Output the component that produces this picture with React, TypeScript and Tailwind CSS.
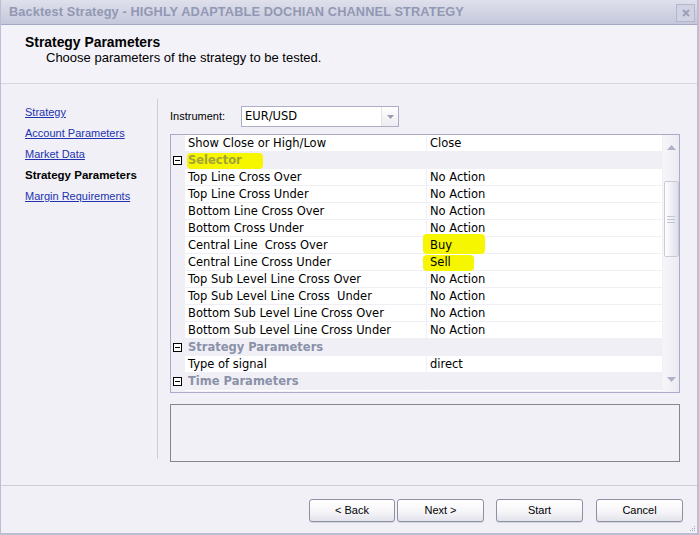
import React from 'react';

type Row =
  | { kind: 'cat'; label: string; marked?: boolean }
  | { kind: 'prop'; name: string; value: string; mark?: 'buy' | 'sell' };

const rows: Row[] = [
  { kind: 'prop', name: 'Show Close or High/Low', value: 'Close' },
  { kind: 'cat', label: 'Selector', marked: true },
  { kind: 'prop', name: 'Top Line Cross Over', value: 'No Action' },
  { kind: 'prop', name: 'Top Line Cross Under', value: 'No Action' },
  { kind: 'prop', name: 'Bottom Line Cross Over', value: 'No Action' },
  { kind: 'prop', name: 'Bottom Cross Under', value: 'No Action' },
  { kind: 'prop', name: 'Central Line  Cross Over', value: 'Buy', mark: 'buy' },
  { kind: 'prop', name: 'Central Line Cross Under', value: 'Sell', mark: 'sell' },
  { kind: 'prop', name: 'Top Sub Level Line Cross Over', value: 'No Action' },
  { kind: 'prop', name: 'Top Sub Level Line Cross  Under', value: 'No Action' },
  { kind: 'prop', name: 'Bottom Sub Level Line Cross Over', value: 'No Action' },
  { kind: 'prop', name: 'Bottom Sub Level Line Cross Under', value: 'No Action' },
  { kind: 'cat', label: 'Strategy Parameters' },
  { kind: 'prop', name: 'Type of signal', value: 'direct' },
  { kind: 'cat', label: 'Time Parameters' },
  { kind: 'prop', name: '', value: '' },
];

const navItems = ['Strategy', 'Account Parameters', 'Market Data', 'Strategy Parameters', 'Margin Requirements'];

function MinusBox() {
  return (
    <div className="ml-[2px] mt-[4px] w-[9px] h-[9px] border border-black bg-white flex items-center justify-center">
      <div className="w-[5px] h-px bg-black" />
    </div>
  );
}

function GridRow({ row }: { row: Row }) {
  if (row.kind === 'cat') {
    return (
      <div className="flex h-[16px] mb-px">
        <div className="w-[14px] shrink-0">
          <MinusBox />
        </div>
        <div className="relative pl-[3px] leading-[17px] font-bold text-[#8a91a8]">
          {row.marked && <span className="absolute left-[2px] top-[1px] w-[76px] h-[16px] bg-[#f6f600] rounded-sm" />}
          <span className={row.marked ? 'relative text-[#a3a33a]' : 'relative'}>{row.label}</span>
        </div>
      </div>
    );
  }
  return (
    <div className="flex h-[16px] mb-px">
      <div className="w-[14px] shrink-0" />
      <div className="w-[241px] shrink-0 bg-white pl-[3px] leading-[17px] whitespace-pre">{row.name}</div>
      <div className="w-[235px] shrink-0 ml-px bg-white pl-[3px] leading-[17px] relative">
        {row.mark === 'buy' && <span className="absolute left-[-4px] top-[-3px] w-[62px] h-[20px] bg-[#f6f600] rounded-sm" />}
        {row.mark === 'sell' && <span className="absolute left-[-4px] top-[1px] w-[51px] h-[16px] bg-[#f6f600] rounded-sm" />}
        <span className="relative">{row.value}</span>
      </div>
    </div>
  );
}

function ScrollBar() {
  return (
    <div className="w-[16px] shrink-0 flex flex-col items-center bg-gradient-to-r from-[#f6f6f9] to-[#ebebf2]">
      <svg width="9" height="5" className="mt-[10px]" viewBox="0 0 9 5">
        <path d="M0 5 L4.5 0 L9 5 Z" fill="#b0b2c8" />
      </svg>
      <div className="mt-[31px] w-[15px] h-[76px] border border-[#c9cad9] rounded-[2px] bg-gradient-to-r from-white to-[#dedee9] flex flex-col items-center justify-center gap-[2px]">
        <div className="w-[8px] h-px bg-[#c2c3d3]" />
        <div className="w-[8px] h-px bg-[#c2c3d3]" />
        <div className="w-[8px] h-px bg-[#c2c3d3]" />
      </div>
      <svg width="9" height="5" className="mt-[120px]" viewBox="0 0 9 5">
        <path d="M0 0 L4.5 5 L9 0 Z" fill="#b0b2c8" />
      </svg>
    </div>
  );
}

function Button({ label, width = 'w-[87px]', className = '' }: { label: string; width?: string; className?: string }) {
  return (
    <button className={`${width} h-[23px] border border-[#8f90a4] rounded-[3px] bg-gradient-to-b from-white via-[#f7f7fa] to-[#e3e3ec] shadow-[0_1px_0_#d4d4de] text-[11px] text-black ${className}`}>
      {label}
    </button>
  );
}

export default function App() {
  const tahoma = "font-['Liberation_Sans',Arial,sans-serif]";
  const verdana = "font-['DejaVu_Sans',Verdana,sans-serif]";

  return (
    <div className={`relative w-[699px] h-[535px] bg-[#f1f0f7] flex flex-col overflow-hidden border-r-2 border-b-2 border-l border-[#bcbfd3] ${tahoma}`}>
      {/* title bar */}
      <div className="h-[25px] shrink-0 flex items-center justify-between pl-[8px] pr-[2px] border-b border-[#a3a7c2] bg-gradient-to-b from-[#dfe0ec] to-[#c5c8dc]">
        <span className="text-[12.8px] font-bold text-[#9298b3] tracking-[0.1px]">
          Backtest Strategy - HIGHLY ADAPTABLE DOCHIAN CHANNEL STRATEGY
        </span>
        <div className="w-[19px] h-[18px] mt-[1px] border border-[#b3b6cc] bg-[#d1d3e3] flex items-center justify-center">
          <svg width="8" height="8" viewBox="0 0 8 8">
            <path d="M1 1 L7 7 M7 1 L1 7" stroke="#9ba0bb" strokeWidth="2" />
          </svg>
        </div>
      </div>

      {/* header */}
      <div className="h-[59px] shrink-0 border-b border-[#d6d6e0] bg-[#f3f2f8] pl-[24px] pt-[9px]">
        <div className="text-[13.9px] font-bold text-black leading-[16px]">Strategy Parameters</div>
        <div className="text-[13px] text-black leading-[16px] pl-[21px]">Choose parameters of the strategy to be tested.</div>
      </div>

      {/* body */}
      <div className="flex-1 flex min-h-0">
        <div className="w-[156px] shrink-0 pl-[24px] pt-[18px] flex flex-col">
          {navItems.map((item) =>
            item === 'Strategy Parameters' ? (
              <div key={item} className="h-[21px] leading-[21px] text-[11.5px] font-bold text-black">
                {item}
              </div>
            ) : (
              <a key={item} className="h-[21px] leading-[21px] text-[11px] text-[#2233b0] underline">
                {item}
              </a>
            )
          )}
        </div>
        <div className="w-px shrink-0 bg-[#cdcdd9] mt-[15px] mb-[26px]" />
        <div className="flex-1 pl-[12px] pt-[22px] flex flex-col">
          <div className="flex items-center h-[21px]">
            <span className="w-[71px] text-[11px] text-black">Instrument:</span>
            <div className="w-[158px] h-[21px] border border-[#abaec4] bg-white flex">
              <span className={`flex-1 pl-[3px] leading-[19px] text-[11.5px] text-black ${verdana}`}>EUR/USD</span>
              <div className="w-[17px] border-l border-[#e4e4ec] bg-gradient-to-b from-white to-[#ececf2] flex items-center justify-center">
                <svg width="7" height="4" viewBox="0 0 7 4">
                  <path d="M0 0 L3.5 4 L7 0 Z" fill="#9a9cb4" />
                </svg>
              </div>
            </div>
          </div>

          <div className={`mt-[7px] w-[510px] h-[259px] border border-[#a9abc9] bg-[#f0eff6] flex overflow-hidden text-[11.5px] text-black ${verdana}`}>
            <div className="w-[491px] shrink-0 flex flex-col">
              {rows.map((row, i) => (
                <GridRow key={i} row={row} />
              ))}
            </div>
            <div className="w-px shrink-0" />
            <ScrollBar />
          </div>

          <div className="mt-[11px] w-[510px] h-[58px] border border-[#85858f] bg-[#f1f0f7]" />
        </div>
      </div>

      {/* footer */}
      <div className="h-[48px] shrink-0 border-t border-[#cfcfdb] flex items-start justify-end pr-[14px] pt-[13px]">
        <Button label="< Back" width="w-[86px]" />
        <Button label="Next >" className="ml-[2px]" />
        <Button label="Start" className="ml-[12px]" />
        <Button label="Cancel" className="ml-[13px]" />
      </div>

      {/* resize grip */}
      <div className="absolute right-[2px] bottom-[2px] grid grid-cols-3 gap-px">
        <span className="w-px h-px" />
        <span className="w-px h-px" />
        <span className="w-px h-px bg-[#a8aac0]" />
        <span className="w-px h-px" />
        <span className="w-px h-px bg-[#a8aac0]" />
        <span className="w-px h-px bg-[#a8aac0]" />
        <span className="w-px h-px bg-[#a8aac0]" />
        <span className="w-px h-px bg-[#a8aac0]" />
        <span className="w-px h-px bg-[#a8aac0]" />
      </div>
    </div>
  );
}
